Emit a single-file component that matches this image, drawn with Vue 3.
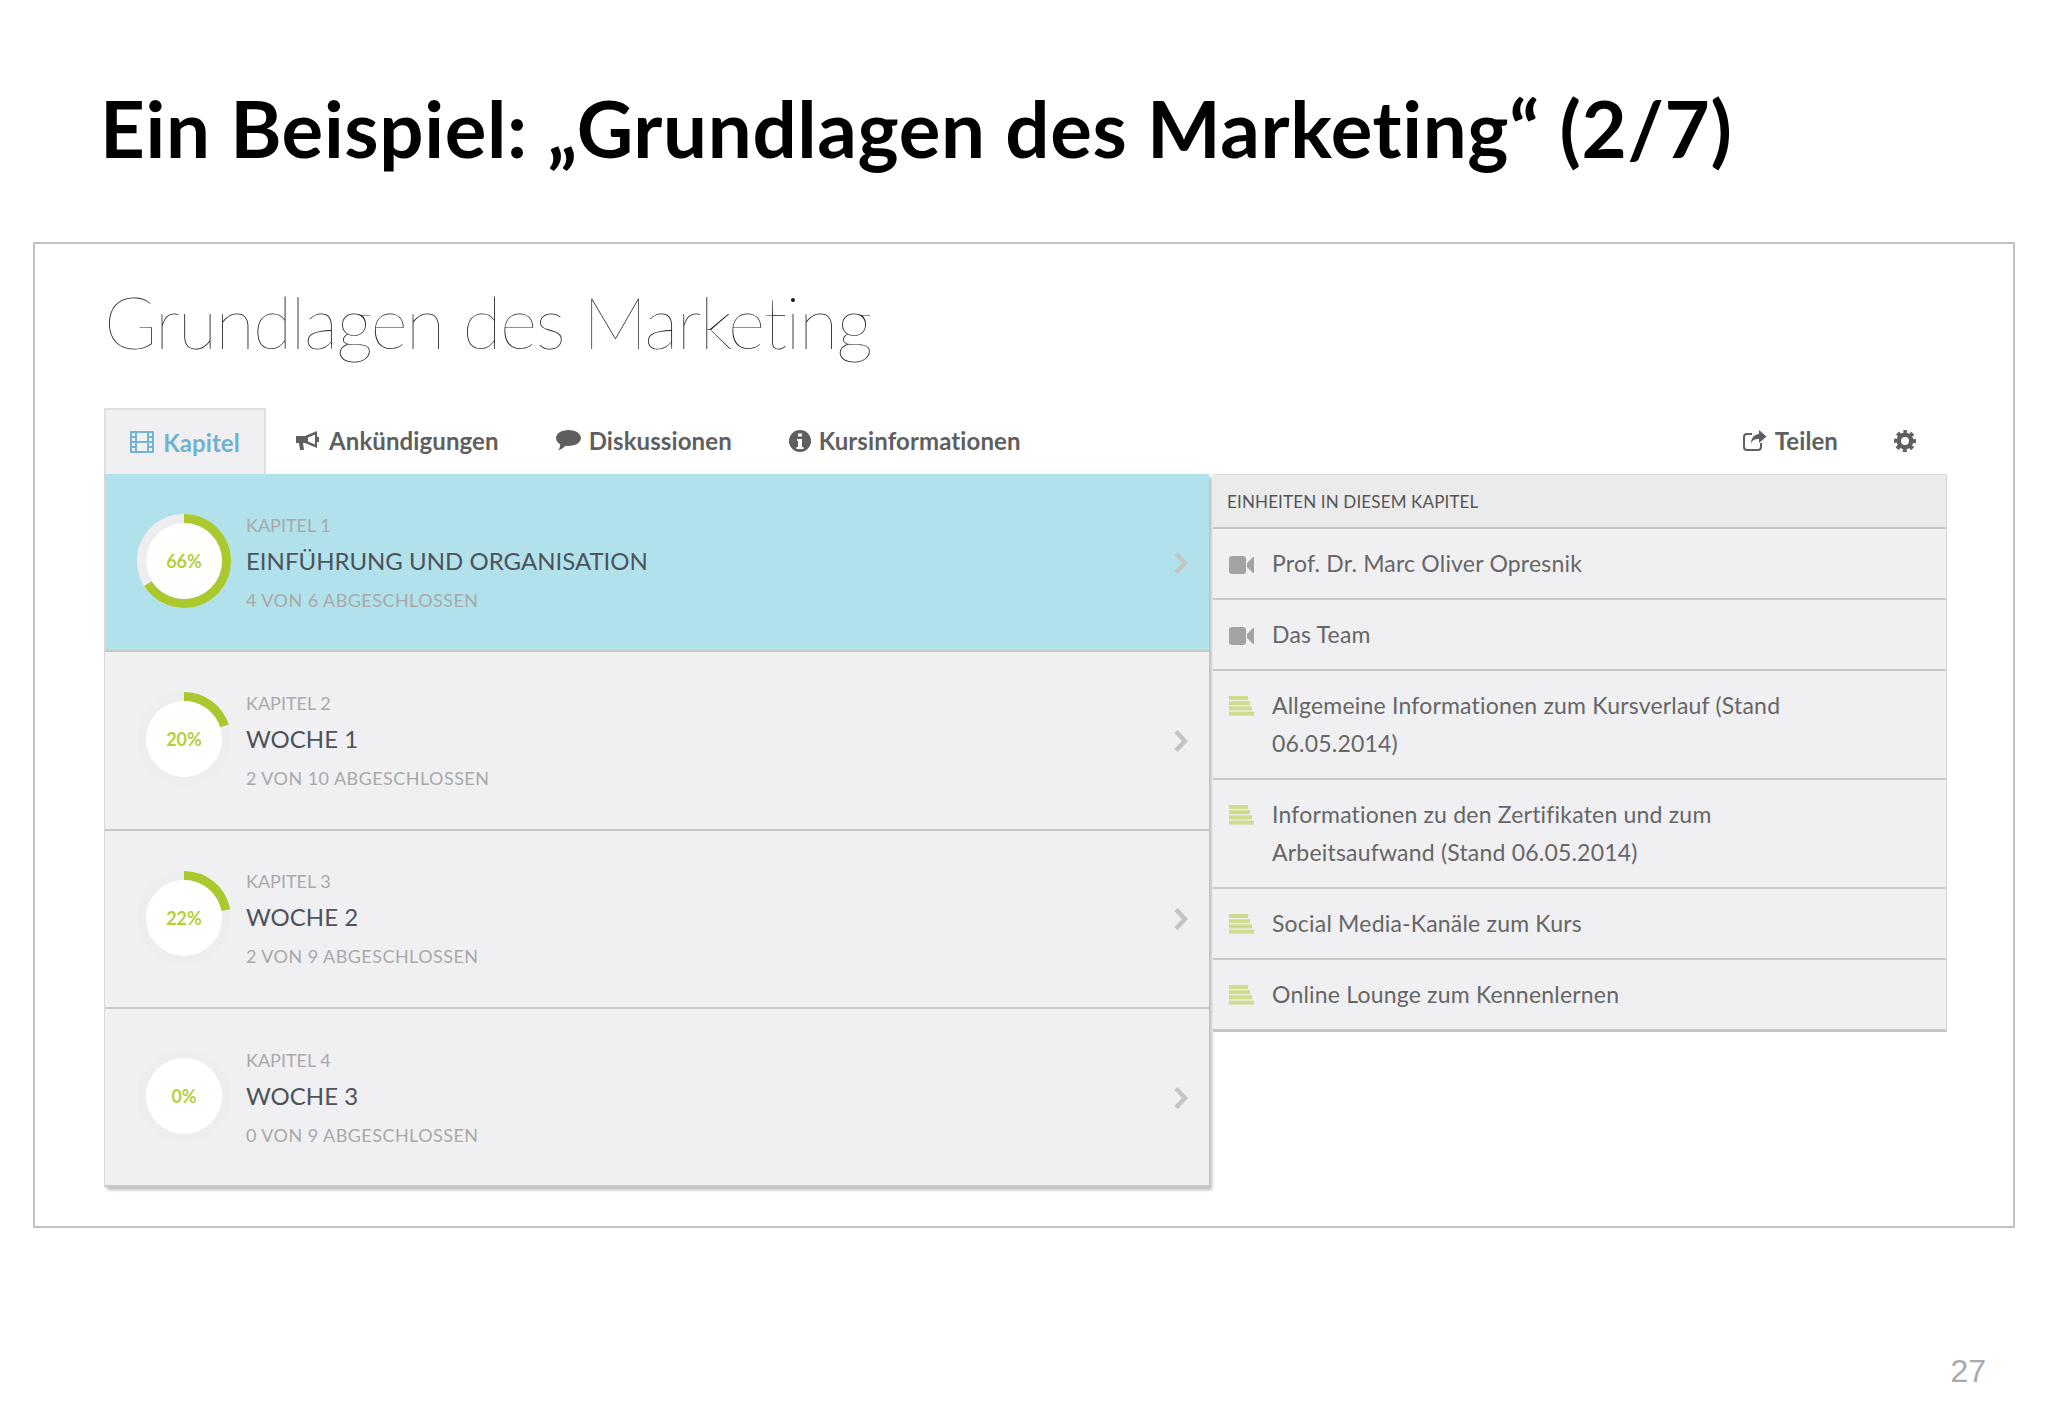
<script setup>
const C = 2 * Math.PI * 42.5
const chapters = [
  { label: 'KAPITEL 1', name: 'EINFÜHRUNG UND ORGANISATION', done: '4 VON 6 ABGESCHLOSSEN', pct: 66, active: true },
  { label: 'KAPITEL 2', name: 'WOCHE 1', done: '2 VON 10 ABGESCHLOSSEN', pct: 20 },
  { label: 'KAPITEL 3', name: 'WOCHE 2', done: '2 VON 9 ABGESCHLOSSEN', pct: 22 },
  { label: 'KAPITEL 4', name: 'WOCHE 3', done: '0 VON 9 ABGESCHLOSSEN', pct: 0 },
]
const units = [
  { type: 'video', text: 'Prof. Dr. Marc Oliver Opresnik' },
  { type: 'video', text: 'Das Team' },
  { type: 'text', text: 'Allgemeine Informationen zum Kursverlauf (Stand 06.05.2014)' },
  { type: 'text', text: 'Informationen zu den Zertifikaten und zum Arbeitsaufwand (Stand 06.05.2014)' },
  { type: 'text', text: 'Social Media-Kanäle zum Kurs' },
  { type: 'text', text: 'Online Lounge zum Kennenlernen' },
]
</script>

<template>
  <div class="page">
    <h1 class="title">Ein Beispiel: „Grundlagen des Marketing“ (2/7)</h1>
    <section class="frame">
      <h2 class="course">Grundlagen des Marketing</h2>
      <nav class="tabs">
        <a class="tab current">
          <svg class="ti" width="24" height="22" viewBox="0 0 24 22"><g fill="#74b4d0"><path d="M1 0h22a1 1 0 0 1 1 1v20a1 1 0 0 1-1 1H1a1 1 0 0 1-1-1V1a1 1 0 0 1 1-1zm1 2v3h3V2zm0 5v3h3V7zm0 5v3h3v-3zm0 5v3h3v-3zM7 2v8h10V2zm0 10v8h10v-8zM19 2v3h3V2zm0 5v3h3V7zm0 5v3h3v-3zm0 5v3h3v-3z" fill-rule="evenodd"/></g></svg>
          Kapitel
        </a>
        <a class="tab">
          <svg class="ti" width="25" height="21" viewBox="0 0 25 21"><path d="M0 6h9v7H7l1 7H4l-1-7H0z" fill="#5f5f5f"/><path d="M9 6l12-5v17L9 13z" fill="#5f5f5f"/><path d="M12 7.500l7-3v10l-7-3z" fill="#fff"/><path d="M21 7h2v5h-2z" fill="#5f5f5f"/></svg>
          Ankündigungen
        </a>
        <a class="tab">
          <svg class="ti" width="25" height="21" viewBox="0 0 25 21"><path d="M12.500 0C19.400 0 25 3.600 25 8s-5.600 8-12.500 8c-1 0-2-.1-3-.2C7.500 18 4.500 20 2 20.500c1.200-1.300 2-3 2.200-6.300C1.600 12.800 0 10.500 0 8 0 3.600 5.600 0 12.500 0z" fill="#5f5f5f"/></svg>
          Diskussionen
        </a>
        <a class="tab">
          <svg class="ti" width="22" height="22" viewBox="0 0 22 22"><circle cx="11" cy="11" r="11" fill="#5f5f5f"/><path d="M9 3.500h4v3H9zM8 9h5v8h1.500v2h-7v-2H9v-6H8z" fill="#fff"/></svg>
          Kursinformationen
        </a>
        <span class="spacer"></span>
        <a class="tab share">
          <svg class="ti" width="24" height="21" viewBox="0 0 24 21"><path d="M9 4H4a3 3 0 0 0-3 3v10a3 3 0 0 0 3 3h11a3 3 0 0 0 3-3v-4" fill="none" stroke="#5f5f5f" stroke-width="2"/><path d="M16 0l7.500 6.500L16 13V9c-4 0-7 1-8 5 0-6 3-9.500 8-10z" fill="#5f5f5f"/></svg>
          Teilen
        </a>
        <a class="gear">
          <svg width="22" height="22" viewBox="0 0 22 22"><circle cx="11" cy="11" r="6.200" fill="none" stroke="#5f5f5f" stroke-width="4.500"/><circle cx="11" cy="11" r="9" fill="none" stroke="#5f5f5f" stroke-width="4" stroke-dasharray="3.800 3.270" stroke-dashoffset="1.900" transform="rotate(-90 11 11)"/></svg>
        </a>
      </nav>
      <div class="panels">
        <ul class="chapters">
          <li v-for="c in chapters" :key="c.label" class="chapter" :class="{ active: c.active }">
            <div class="ring">
              <svg width="96" height="96" viewBox="0 0 96 96">
                <circle cx="48" cy="48" r="42.500" fill="none" class="track" stroke-width="9"/>
                <circle cx="48" cy="48" r="42.500" fill="none" stroke="#a9c92f" stroke-width="9"
                  :stroke-dasharray="`${C * c.pct / 100} ${C}`" transform="rotate(-90 48 48)"/>
                <circle cx="48" cy="48" r="38" fill="#fff"/>
              </svg>
              <span class="pct">{{ c.pct }}%</span>
            </div>
            <div class="info">
              <div class="label">{{ c.label }}</div>
              <div class="name">{{ c.name }}</div>
              <div class="done">{{ c.done }}</div>
            </div>
            <svg class="chev" width="15" height="24" viewBox="0 0 15 24"><path d="M3 2.500l9 9.500-9 9.500" fill="none" stroke="#c4c4c4" stroke-width="4.500"/></svg>
          </li>
        </ul>
        <div class="units">
          <div class="uhead">EINHEITEN IN DIESEM KAPITEL</div>
          <div v-for="u in units" :key="u.text" class="unit">
            <svg v-if="u.type === 'video'" class="uicon vid" width="25" height="18" viewBox="0 0 25 18"><rect width="17" height="18" rx="3" fill="#a3a3a3"/><path d="M18 7l6-6h1v16h-1l-6-6z" fill="#a3a3a3"/></svg>
            <svg v-else class="uicon txt" width="25" height="20" viewBox="0 0 25 20"><g fill="#cfdc8e"><rect width="19" height="4"/><rect y="5.200" width="21" height="4"/><rect y="10.400" width="23" height="4"/><rect y="15.600" width="25" height="4"/></g></svg>
            <p class="utext">{{ u.text }}</p>
          </div>
        </div>
      </div>
    </section>
    <div class="pageno">27</div>
  </div>
</template>

<style>
html, body { margin: 0; background: #fff; }
</style>

<style scoped>
.page {
  width: 2048px;
  height: 1418px;
  overflow: hidden;
  background: #fff;
  font-family: Lato, "Liberation Sans", sans-serif;
  font-variant-ligatures: none;
}
.title {
  margin: 0;
  height: 242px;
  box-sizing: border-box;
  padding: 82px 0 0 100px;
  font: 700 78px/1.2 Lato, sans-serif;
  letter-spacing: .65px;
  color: #000;
  white-space: nowrap;
}
.frame {
  box-sizing: border-box;
  width: 1982px;
  height: 986px;
  margin-left: 33px;
  border: 2px solid #c3c3c3;
  padding: 0 66px 0 69px;
}
.course {
  margin: 0;
  height: 164px;
  box-sizing: border-box;
  padding-top: 34px;
  font: 100 72px/1.2 Lato, sans-serif;
  letter-spacing: -1.600px;
  color: #222;
  white-space: nowrap;
}
.tabs {
  display: flex;
  align-items: center;
  height: 66px;
  box-sizing: border-box;
  padding-bottom: 1px;
  font-size: 24px;
  font-weight: 700;
  letter-spacing: .1px;
  color: #5f5f5f;
}
.tab {
  display: flex;
  align-items: center;
  gap: 8px;
  margin-right: 57px;
  white-space: nowrap;
}
.tab.current {
  align-self: stretch;
  width: 162px;
  box-sizing: border-box;
  justify-content: center;
  gap: 9px;
  margin-bottom: -1px;
  background: #f0f0f2;
  border: 2px solid #e0e0e0;
  border-bottom: 0;
  color: #6fb1cf;
  margin-right: 30px;
}
.spacer { flex: 1; }
.tab.share { margin-right: 0; }
.gear { display: flex; margin: 0 31px 0 56px; }
.panels { display: flex; align-items: flex-start; }
.chapters {
  list-style: none;
  margin: 0;
  padding: 0;
  width: 1105px;
  box-sizing: border-box;
  border-left: 1px solid #d9d9d9;
  box-shadow: 3px 3px 3px rgba(0, 0, 0, .25);
}
.chapter {
  display: flex;
  align-items: center;
  height: 178.300px;
  box-sizing: border-box;
  padding-left: 31px;
  background: #f0f0f2;
  border-bottom: 2px solid #c9c9c9;
}
.chapter.active { background: #b1e2ec; }
.ring { position: relative; width: 96px; height: 96px; flex: none; margin-bottom: 2px; }
.ring svg { display: block; }
.track { stroke: #eeeef0; }
.pct {
  position: absolute;
  inset: 0;
  display: flex;
  align-items: center;
  justify-content: center;
  font-size: 18px;
  font-weight: 700;
  color: #b4cf3c;
}
.info { margin-left: 14px; flex: 1; }
.label { font-size: 18px; line-height: 24px; color: #a9a9a9; }
.name { font-size: 24px; line-height: 32px; margin: 8px 0 11px; color: #4d5359; }
.done { font-size: 18px; line-height: 24px; letter-spacing: .45px; color: #a9a9a9; }
.chev { margin: 1px 21px 0 0; flex: none; }
.units {
  margin-left: 4px;
  width: 734px;
  box-sizing: border-box;
  border-right: 1px solid #d5d5d5;
  border-bottom: 1px solid #c4c4c4;
}
.uhead {
  height: 55px;
  box-sizing: border-box;
  padding-left: 14px;
  display: flex;
  align-items: center;
  background: #ebebeb;
  border-top: 1px solid #dcdcdc;
  border-bottom: 2px solid #c6c6c6;
  font-size: 17px;
  letter-spacing: .15px;
  color: #555;
}
.unit {
  display: flex;
  align-items: flex-start;
  box-sizing: border-box;
  padding: 15px 90px 16px 16px;
  background: #f0f0f2;
  border-bottom: 2px solid #c9c9c9;
}
.uicon { flex: none; margin-right: 18px; }
.vid { margin-top: 12px; }
.txt { margin-top: 10px; }
.utext {
  margin: 0;
  font-size: 23px;
  line-height: 38px;
  letter-spacing: .2px;
  color: #666;
}
.pageno {
  width: 1986px;
  margin-top: 127px;
  text-align: right;
  font: 32px/1 "Liberation Sans", sans-serif;
  color: #a9a9a9;
}
</style>
